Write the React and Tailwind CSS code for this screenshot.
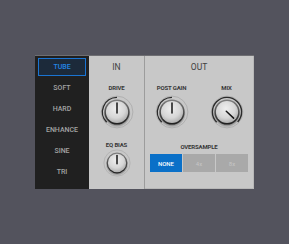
import React from 'react';

const font = { fontFamily: 'Roboto, "Liberation Sans", sans-serif' };

function pt(r, a) {
  const rad = (a * Math.PI) / 180;
  return [r * Math.sin(rad), -r * Math.cos(rad)];
}

function Knob({ size = 34, angle = 0, arc = true, id }) {
  const s = size / 34;
  const [x0, y0] = pt(14.6, -135);
  const [x1, y1] = pt(14.6, angle);
  const large = angle + 135 > 180 ? 1 : 0;
  const [px0, py0] = pt(-1, angle);
  const [px1, py1] = pt(9, angle);
  return (
    <svg width={size} height={size} viewBox="-17 -17 34 34">
      <defs>
        <radialGradient id={`face-${id}`} cx="0.45" cy="0.35" r="0.7">
          <stop offset="0" stopColor="#eeeeee" />
          <stop offset="0.6" stopColor="#d6d6d6" />
          <stop offset="1" stopColor="#a6a6a6" />
        </radialGradient>
        <radialGradient id={`shadow-${id}`} cx="0.5" cy="0.5" r="0.5">
          <stop offset="0.7" stopColor="#000" stopOpacity="0.5" />
          <stop offset="1" stopColor="#000" stopOpacity="0" />
        </radialGradient>
        <linearGradient id={`rim-${id}`} x1="0" y1="0" x2="0" y2="1">
          <stop offset="0" stopColor="#808080" />
          <stop offset="1" stopColor="#1e1e1e" />
        </linearGradient>
      </defs>
      <circle r="15.9" fill="none" stroke="#b0b0b0" strokeWidth="1" />
      {arc && (
        <path
          d={`M ${x0} ${y0} A 14.6 14.6 0 ${large} 1 ${x1} ${y1}`}
          fill="none"
          stroke="#2b2b2b"
          strokeWidth="1.4"
        />
      )}
      <circle cy="1.6" r="13.8" fill={`url(#shadow-${id})`} />
      <circle r="12.6" fill={`url(#rim-${id})`} />
      <circle r="11.1" fill={`url(#face-${id})`} />
      <line x1={px0} y1={py0} x2={px1} y2={py1} stroke="#151515" strokeWidth={1.5 / s} strokeLinecap="round" />
    </svg>
  );
}

function Label({ children, className = '' }) {
  return (
    <div className={`h-[8px] flex items-center justify-center text-[6px] font-bold tracking-[-0.15px] text-[#383838] leading-none ${className}`}>
      {children}
    </div>
  );
}

const modes = ['TUBE', 'SOFT', 'HARD', 'ENHANCE', 'SINE', 'TRI'];

export default function App() {
  return (
    <div className="w-[289px] h-[244px] bg-[#53535d] flex items-center justify-center" style={font}>
      <div className="flex w-[219px] h-[134px] border-t border-[#6e6e72]">
        {/* mode list */}
        <div className="w-[54px] bg-[#202020] flex flex-col gap-[3px] p-[3px] pt-[2px]">
          {modes.map((m, i) => (
            <div
              key={m}
              className={`h-[18px] flex items-center justify-center text-[7px] font-medium leading-none ${
                i === 0
                  ? 'border-[1.5px] border-[#1a74d2] bg-[#1c2a3a] text-[#2386e6] font-bold'
                  : 'text-[#a4a4a4]'
              }`}
            >
              {m}
            </div>
          ))}
        </div>

        {/* IN */}
        <div className="w-[55px] bg-[#c8c8c8] flex flex-col items-center pt-[2px]">
          <div className="h-[18px] flex items-center text-[8.5px] text-[#404040] leading-none">IN</div>
          <Label className="mt-[8px]">DRIVE</Label>
          <div className="mt-[3px] h-[34px]">
            <Knob id="drive" angle={0} />
          </div>
          <Label className="mt-[12px]">EQ BIAS</Label>
          <div className="mt-[0px] h-[28px]">
            <Knob id="eq" size={28} angle={0} arc={false} />
          </div>
        </div>

        <div className="w-px bg-[#9c9c9c]" />

        {/* OUT */}
        <div className="w-[109px] bg-[#c8c8c8] flex flex-col items-center pt-[2px] border-r border-b border-[#b8b8b8]">
          <div className="h-[18px] flex items-center text-[8.5px] text-[#404040] leading-none">OUT</div>
          <div className="flex">
            <div className="w-[55px] flex flex-col items-center">
              <Label className="mt-[8px]">POST GAIN</Label>
              <div className="mt-[3px] h-[34px]">
                <Knob id="post" angle={0} />
              </div>
            </div>
            <div className="w-[55px] flex flex-col items-center">
              <Label className="mt-[8px]">MIX</Label>
              <div className="mt-[3px] h-[34px]">
                <Knob id="mix" angle={133} />
              </div>
            </div>
          </div>
          <Label className="mt-[14px]">OVERSAMPLE</Label>
          <div className="mt-[3px] flex gap-px">
            <div className="w-[32px] h-[18px] bg-[#0a70c8] text-white text-[6px] font-medium flex items-center justify-center">NONE</div>
            <div className="w-[32px] h-[18px] bg-[#a9a9a9] text-[#c6c6c6] text-[6px] flex items-center justify-center">4x</div>
            <div className="w-[32px] h-[18px] bg-[#a9a9a9] text-[#c6c6c6] text-[6px] flex items-center justify-center">8x</div>
          </div>
        </div>
      </div>
    </div>
  );
}
